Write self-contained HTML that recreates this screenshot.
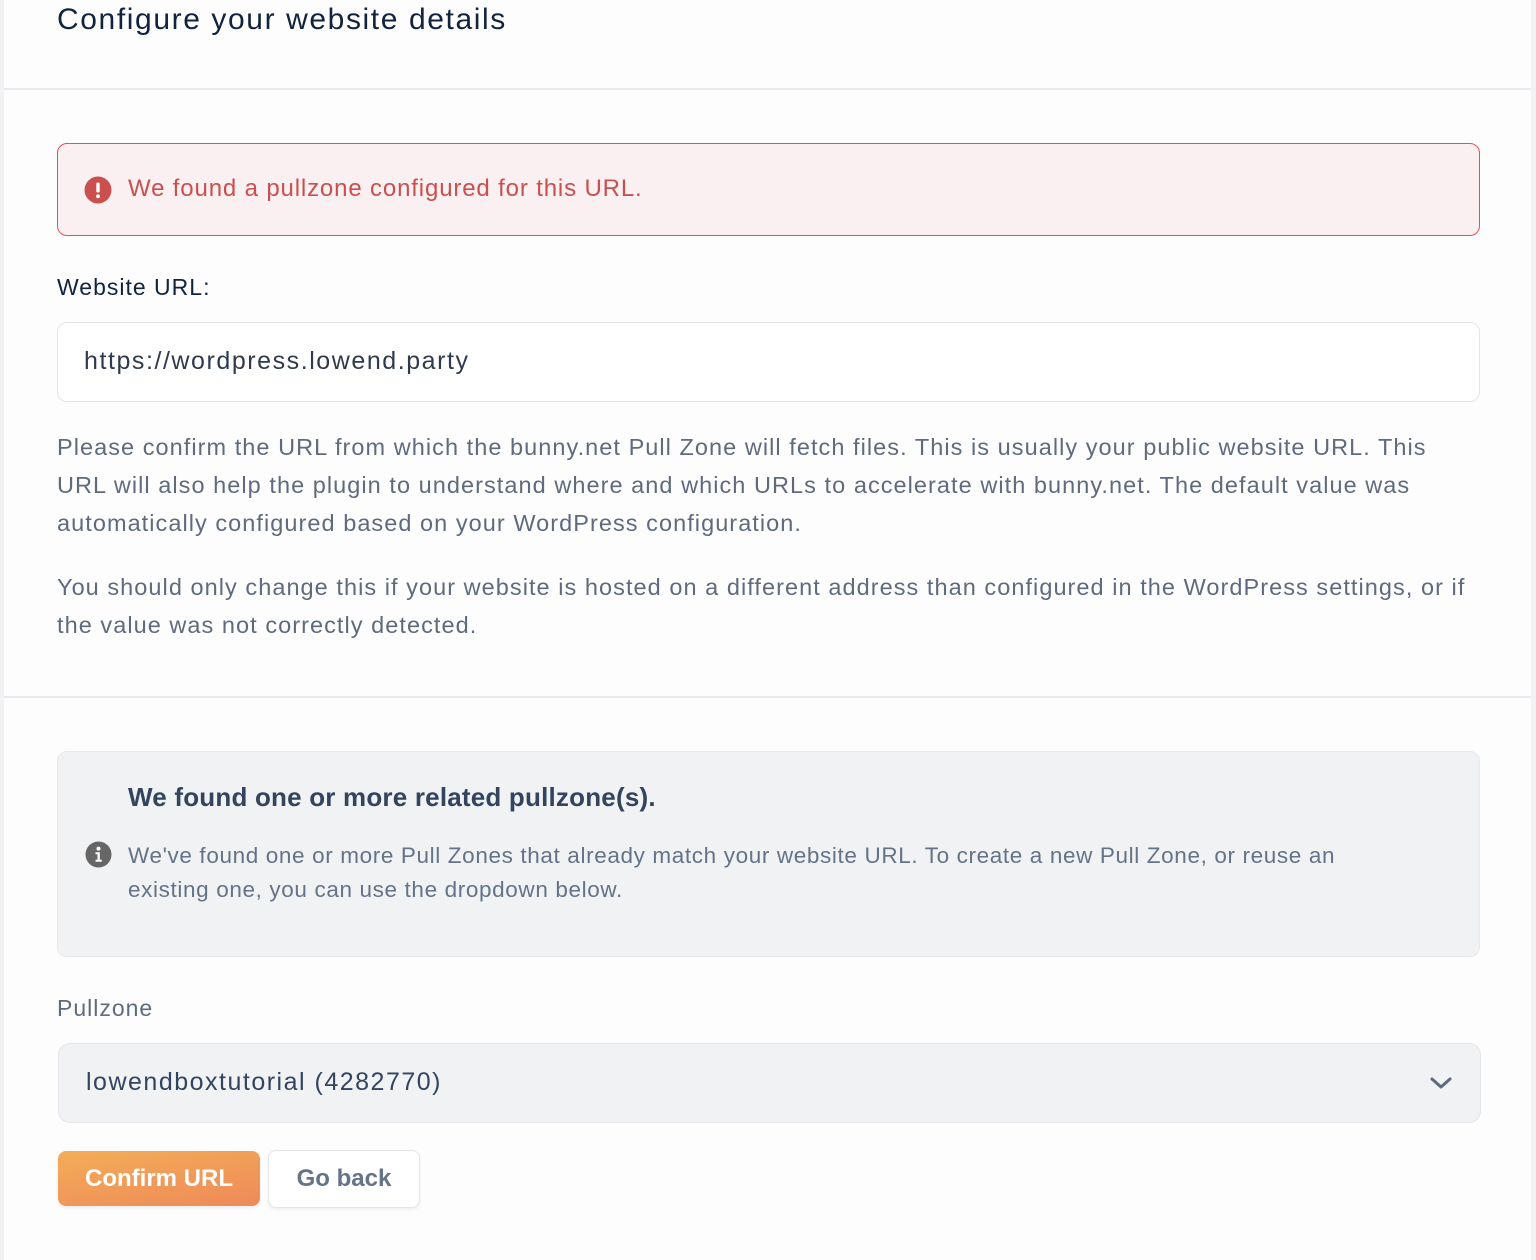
<!DOCTYPE html>
<html><head><meta charset="utf-8"><style>
*{margin:0;padding:0;box-sizing:border-box}
body{width:1536px;height:1260px;background:#f1f2f4;font-family:"Liberation Sans",sans-serif;position:relative;overflow:hidden}
.card{position:absolute;left:4px;top:0;width:1527px;height:1260px;background:#fdfdfd}
.a{position:absolute;white-space:nowrap}
.hr{position:absolute;left:4px;width:1527px;height:2px;background:#e8e9ec}
.p{color:#5f6b7d;font-size:23.5px;line-height:38px;white-space:nowrap;letter-spacing:1.05px}
</style></head><body>
<div class="card"></div>
<div class="a" style="left:57px;top:3px;font-size:30px;color:#12233d;letter-spacing:1.6px">Configure your website details</div>
<div class="hr" style="top:88px"></div>
<div class="a" style="left:57px;top:143px;width:1423px;height:93px;border:1.5px solid #d6575a;border-radius:10px;background:#fbf0f1"></div>
<svg class="a" style="left:84px;top:176px" width="28" height="28" viewBox="0 0 28 28"><circle cx="14" cy="14" r="13.5" fill="#c9504f"/><rect x="12.3" y="6.5" width="3.4" height="10" rx="1.5" fill="#fff"/><circle cx="14" cy="20.3" r="1.9" fill="#fff"/></svg>
<div class="a" style="left:128px;top:175px;font-size:24px;color:#c9504f;letter-spacing:0.85px">We found a pullzone configured for this URL.</div>
<div class="a" style="left:57px;top:274px;font-size:23px;color:#12233d;letter-spacing:1px">Website URL:</div>
<div class="a" style="left:57px;top:322px;width:1423px;height:80px;border:1.5px solid #e3e5e8;border-radius:10px;background:#fff"></div>
<div class="a" style="left:84px;top:347px;font-size:25px;color:#2f3b4c;letter-spacing:1.55px">https://wordpress.lowend.party</div>
<div class="a p" style="left:57px;top:428px">Please confirm the URL from which the bunny.net Pull Zone will fetch files. This is usually your public website URL. This<br>URL will also help the plugin to understand where and which URLs to accelerate with bunny.net. The default value was<br>automatically configured based on your WordPress configuration.</div>
<div class="a p" style="left:57px;top:568px">You should only change this if your website is hosted on a different address than configured in the WordPress settings, or if<br>the value was not correctly detected.</div>
<div class="hr" style="top:696px"></div>
<div class="a" style="left:57px;top:751px;width:1423px;height:206px;border:1.5px solid #e6e8eb;border-radius:10px;background:#f1f2f4"></div>
<div class="a" style="left:128px;top:782px;font-size:26px;font-weight:bold;color:#33455e;letter-spacing:0.2px">We found one or more related pullzone(s).</div>
<svg class="a" style="left:85px;top:841px" width="27" height="27" viewBox="0 0 27 27"><circle cx="13.5" cy="13.5" r="13" fill="#666"/><circle cx="13.5" cy="7.6" r="2" fill="#fff"/><path d="M10.5 11.3h4.3v7.5h2v2h-6.3v-2h2v-5.5h-2z" fill="#fff"/></svg>
<div class="a" style="left:128px;top:839px;font-size:22.5px;line-height:34px;color:#647387;letter-spacing:0.63px">We've found one or more Pull Zones that already match your website URL. To create a new Pull Zone, or reuse an<br>existing one, you can use the dropdown below.</div>
<div class="a" style="left:57px;top:995px;font-size:23px;color:#5f6b7d;letter-spacing:1px">Pullzone</div>
<div class="a" style="left:58px;top:1043px;width:1423px;height:80px;border:1.5px solid #e3e5e8;border-radius:12px;background:#f1f2f4"></div>
<div class="a" style="left:86px;top:1068px;font-size:25px;color:#33455e;letter-spacing:1.5px">lowendboxtutorial (4282770)</div>
<svg class="a" style="left:1430px;top:1076px" width="22" height="14" viewBox="0 0 22 14"><path d="M2 3l9 8 9-8" fill="none" stroke="#5f6b7d" stroke-width="3" stroke-linecap="round" stroke-linejoin="round"/></svg>
<div class="a" style="left:58px;top:1151px;width:202px;height:55px;border-radius:8px;background:linear-gradient(170deg,#f4ad58,#ee8a58);color:#fff;font-weight:bold;font-size:24px;text-align:center;line-height:55px;box-shadow:0 2px 3px rgba(0,0,0,.06)">Confirm URL</div>
<div class="a" style="left:268px;top:1150px;width:152px;height:58px;border:1.5px solid #e3e5e8;border-radius:8px;background:#fff;color:#647387;font-weight:bold;font-size:24px;text-align:center;line-height:55px;box-shadow:0 2px 3px rgba(0,0,0,.05)">Go back</div>
</body></html>
